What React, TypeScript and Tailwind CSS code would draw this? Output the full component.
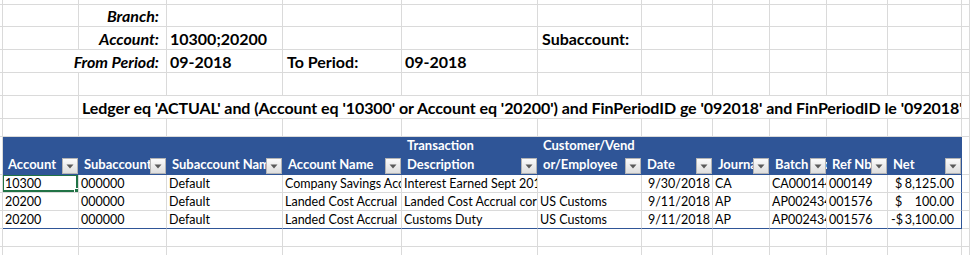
import React from "react";

const font = "font-['Lato','Liberation_Sans',sans-serif]";

function Cell({ children, className = "" }: { children?: React.ReactNode; className?: string }) {
  return (
    <div className={`relative flex items-end overflow-hidden whitespace-nowrap border-r border-b border-[#dadada] ${className}`}>
      {children}
    </div>
  );
}

function Blank({ n }: { n: number }) {
  return (
    <>
      {Array.from({ length: n }).map((_, i) => (
        <Cell key={i} />
      ))}
    </>
  );
}

function FilterButton() {
  return (
    <span className="absolute bottom-[1px] right-[1px] flex h-4 w-4 items-center justify-center border border-[#b4b4b4] bg-gradient-to-b from-[#fbfbfb] to-[#dedede]">
      <svg width="8" height="5" viewBox="0 0 8 5">
        <path d="M0.5 0.5 L7.5 0.5 L4 4.5 Z" fill="#5a5a5a" />
      </svg>
    </span>
  );
}

const headers: string[][] = [
  ["Account"],
  ["Subaccount"],
  ["Subaccount Name"],
  ["Account Name"],
  ["Transaction", "Description"],
  ["Customer/Vend", "or/Employee"],
  ["Date"],
  ["Journal"],
  ["Batch Nbr"],
  ["Ref Nbr"],
  ["Net"],
];

type Row = {
  account: string;
  sub: string;
  subName: string;
  accountName: string;
  desc: string;
  customer: string;
  date: string;
  journal: string;
  batch: string;
  ref: string;
  sign: string;
  net: string;
};

const rows: Row[] = [
  {
    account: "10300",
    sub: "000000",
    subName: "Default",
    accountName: "Company Savings Account",
    desc: "Interest Earned Sept 2018",
    customer: "",
    date: "9/30/2018",
    journal: "CA",
    batch: "CA000144",
    ref: "000149",
    sign: "$",
    net: "8,125.00",
  },
  {
    account: "20200",
    sub: "000000",
    subName: "Default",
    accountName: "Landed Cost Accrual",
    desc: "Landed Cost Accrual correction",
    customer: "US Customs",
    date: "9/11/2018",
    journal: "AP",
    batch: "AP002434",
    ref: "001576",
    sign: "$",
    net: "100.00",
  },
  {
    account: "20200",
    sub: "000000",
    subName: "Default",
    accountName: "Landed Cost Accrual",
    desc: "Customs Duty",
    customer: "US Customs",
    date: "9/11/2018",
    journal: "AP",
    batch: "AP002434",
    ref: "001576",
    sign: "-$",
    net: "3,100.00",
  },
];

export default function App() {
  const label = "justify-end pr-[7px] text-[16px] leading-[20px] font-bold italic text-black";
  const value = "pl-[3px] text-[16px] leading-[20px] font-bold text-black";
  const data = "text-[12.5px] leading-[17px] text-black";

  return (
    <div className={`h-[255px] w-[970px] overflow-hidden bg-white ${font}`}>
      <div className="grid grid-cols-[3px_76px_88px_116px_119px_136px_104px_71px_57px_57px_61px_74px_8px] grid-rows-[5px_22px_23px_23px_23px_23px_18px_38px_18px_18px_18px_18px_12px]">
        {/* row 0 - partial */}
        <Blank n={13} />

        {/* Branch */}
        <Blank n={2} />
        <Cell className={label}>Branch:</Cell>
        <Blank n={10} />

        {/* Account / Subaccount */}
        <Blank n={2} />
        <Cell className={label}>Account:</Cell>
        <Cell className={value}>10300;20200</Cell>
        <Blank n={2} />
        <Cell className={`${value} pl-[4px]`}>Subaccount:</Cell>
        <Blank n={6} />

        {/* Periods - label spills left into the empty cell */}
        <Cell />
        <Cell className={`col-span-2 ${label}`}>From Period:</Cell>
        <Cell className={value}>09-2018</Cell>
        <Cell className={`${value} pl-[4px]`}>To Period:</Cell>
        <Cell className={`${value} pl-[2px]`}>09-2018</Cell>
        <Blank n={7} />

        <Blank n={13} />

        {/* filter expression */}
        <Blank n={2} />
        <Cell className={`col-span-10 pl-[3px] ${value} tracking-[-0.06px]`}>
          Ledger eq 'ACTUAL' and (Account eq '10300' or Account eq '20200') and FinPeriodID ge '092018' and FinPeriodID le '092018'
        </Cell>
        <Cell />

        <Blank n={13} />

        {/* table header */}
        <Cell />
        {headers.map((h, i) => (
          <div
            key={i}
            className="relative flex flex-col justify-end overflow-hidden whitespace-nowrap bg-[#2f5597] pb-[1px] pl-[5px] text-[13px] leading-[19px] font-bold text-white"
          >
            {h.map((line) => (
              <span key={line}>{line}</span>
            ))}
            <FilterButton />
          </div>
        ))}
        <Cell />

        {/* table body */}
        {rows.map((r, i) => {
          const last = i === rows.length - 1 ? "border-b-[#2f5597]" : "";
          return (
            <React.Fragment key={i}>
              <Cell />
              <Cell className={`${data} pl-[2px] ${last}`}>
                {r.account}
                {i === 0 && (
                  <span className="absolute -top-[1px] -left-[1px] right-0 bottom-0 border-2 border-[#217346]">
                    <span className="absolute -right-[4px] -bottom-[4px] h-[6px] w-[6px] border border-white bg-[#217346]" />
                  </span>
                )}
              </Cell>
              <Cell className={`${data} pl-[2px] ${last}`}>{r.sub}</Cell>
              <Cell className={`${data} pl-[2px] ${last}`}>{r.subName}</Cell>
              <Cell className={`${data} pl-[2px] ${last}`}>{r.accountName}</Cell>
              <Cell className={`${data} pl-[2px] ${last}`}>{r.desc}</Cell>
              <Cell className={`${data} pl-[2px] ${last}`}>{r.customer}</Cell>
              <Cell className={`${data} justify-end pr-[2px] ${last}`}>{r.date}</Cell>
              <Cell className={`${data} pl-[2px] ${last}`}>{r.journal}</Cell>
              <Cell className={`${data} pl-[2px] ${last}`}>{r.batch}</Cell>
              <Cell className={`${data} pl-[2px] ${last}`}>{r.ref}</Cell>
              <Cell className={`${data} justify-between border-r-[#2f5597] pr-[7px] ${r.sign === "$" ? "pl-[7px]" : "pl-[3px]"} ${last}`}>
                <span>{r.sign}</span>
                <span>{r.net}</span>
              </Cell>
              <Cell />
            </React.Fragment>
          );
        })}

        <Blank n={13} />
        <Blank n={13} />
      </div>
    </div>
  );
}
